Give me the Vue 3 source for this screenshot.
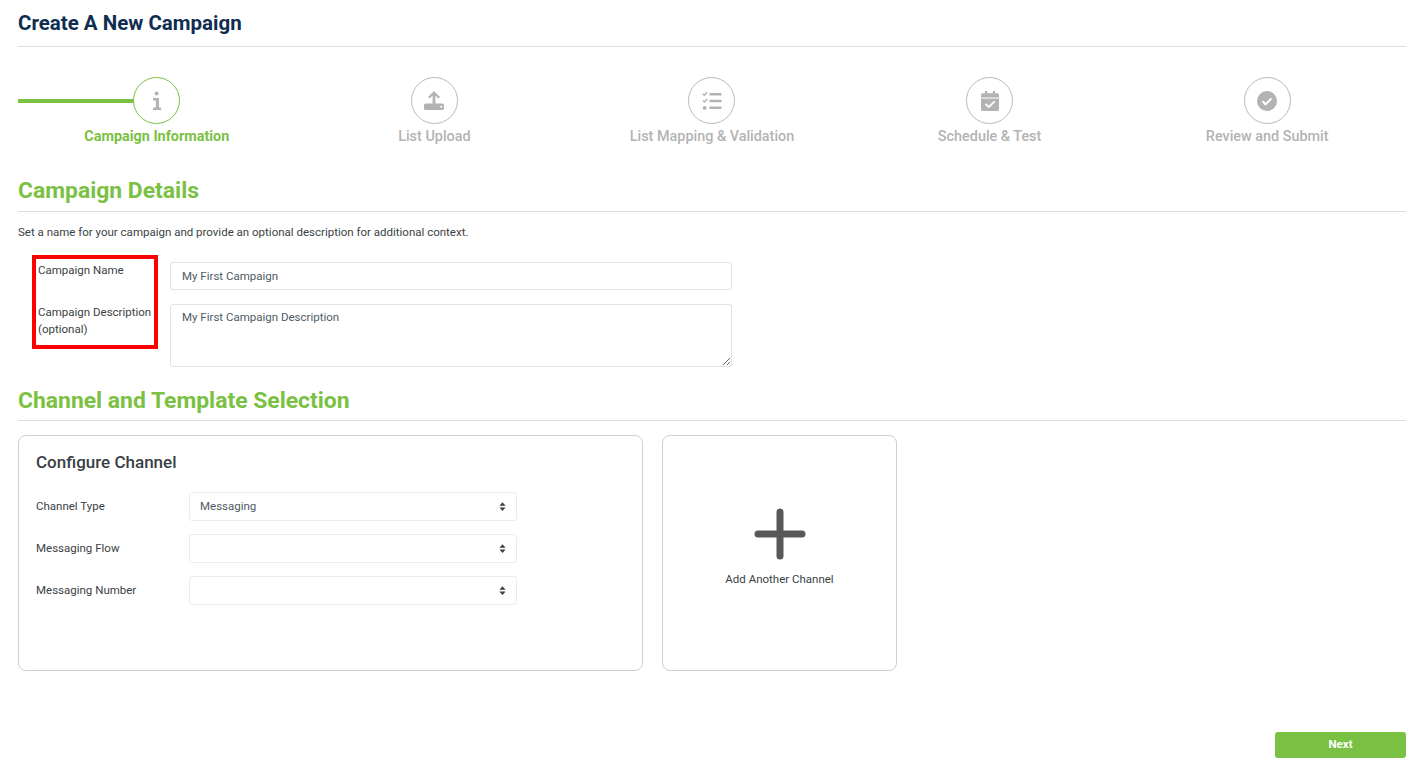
<template>
  <div class="page">
    <header class="page-header">
      <h1>Create A New Campaign</h1>
    </header>

    <ol class="stepper">
      <li v-for="(step, i) in steps" :key="step.label" class="step" :class="{ active: i === 0 }">
        <span v-if="i === 0" class="step-line"></span>
        <span class="step-circle">
          <svg v-if="step.icon === 'info'" width="24" height="24" viewBox="0 0 24 24" fill="#b3b3b3">
            <circle cx="11.600" cy="4.600" r="2" />
            <path d="M8 9h6v9.600h2.200V21H8v-2.400h2.800v-7.200H8z" />
          </svg>
          <svg v-else-if="step.icon === 'upload'" width="24" height="24" viewBox="0 0 24 24" fill="#b3b3b3">
            <path d="M12 2l6 6-1.500 1.500-3.100-3V15h-2.800V6.500l-3.100 3L6 8z" />
            <path fill-rule="evenodd" d="M3.700 14.500h16.600c.9 0 1.700.7 1.700 1.600v3.300c0 .9-.8 1.600-1.700 1.600H3.700c-.9 0-1.700-.7-1.700-1.600v-3.300c0-.9.8-1.600 1.700-1.600zm15.500 2.300a1 1 0 100 2 1 1 0 000-2z" />
          </svg>
          <svg v-else-if="step.icon === 'list'" width="24" height="24" viewBox="0 0 24 24" fill="#b3b3b3">
            <rect x="9.500" y="4" width="12" height="2.400" rx=".5" />
            <rect x="9.500" y="10.800" width="12" height="2.400" rx=".5" />
            <rect x="9.500" y="17.600" width="12" height="2.400" rx=".5" />
            <path d="M2.800 4.800l1.500 1.500 3-3" fill="none" stroke="#b3b3b3" stroke-width="1.500" />
            <path d="M2.800 11.500l1.500 1.500 3-3" fill="none" stroke="#b3b3b3" stroke-width="1.500" />
            <circle cx="4.600" cy="18.800" r="1.900" />
          </svg>
          <svg v-else-if="step.icon === 'calendar'" width="24" height="24" viewBox="0 0 24 24" fill="#b3b3b3">
            <path d="M7 2h2.200v2.200h5.600V2H17v2.200h2.200c.9 0 1.800.8 1.800 1.800v2.400H3V6c0-1 .9-1.800 1.800-1.800H7z" />
            <path fill-rule="evenodd" d="M3 9.600h18v10.600c0 1-.9 1.800-1.800 1.800H4.800C3.900 22 3 21.200 3 20.200zm13.100 2.200l-5.300 5-2.800-2.500-1.200 1.300 4 3.700 6.500-6.200z" />
          </svg>
          <svg v-else width="24" height="24" viewBox="0 0 24 24">
            <circle cx="12" cy="12" r="10" fill="#b3b3b3" />
            <path d="M7.500 12.300l3.100 3 5.900-5.900" fill="none" stroke="#fff" stroke-width="2" />
          </svg>
        </span>
        <span class="step-label">{{ step.label }}</span>
      </li>
    </ol>

    <section class="details">
      <h2 class="section-title details-title">Campaign Details</h2>
      <p class="intro">Set a name for your campaign and provide an optional description for additional context.</p>
      <div class="details-form">
        <label class="form-label">Campaign Name</label>
        <input class="form-input" type="text" value="My First Campaign" />
        <label class="form-label">Campaign Description (optional)</label>
        <textarea class="form-input form-area">My First Campaign Description</textarea>
        <div class="highlight"></div>
      </div>
    </section>

    <section class="channels">
      <h2 class="section-title">Channel and Template Selection</h2>
      <div class="cards">
        <div class="card config-card">
          <h3>Configure Channel</h3>
          <div v-for="row in channelRows" :key="row.label" class="select-row">
            <label>{{ row.label }}</label>
            <div class="select-wrap">
              <select>
                <option>{{ row.value }}</option>
              </select>
              <svg class="select-arrows" width="7" height="9" viewBox="0 0 8 10" fill="#3a3f45">
                <path d="M4 0l3.500 4H.5zM4 10L.5 6h7z" />
              </svg>
            </div>
          </div>
        </div>
        <div class="card add-card">
          <svg width="52" height="52" viewBox="0 0 52 52">
            <path d="M26 4v44M4 26h44" stroke="#58585a" stroke-width="7" stroke-linecap="round" />
          </svg>
          <span>Add Another Channel</span>
        </div>
      </div>
    </section>

    <footer class="actions">
      <button type="button" class="next-btn">Next</button>
    </footer>
  </div>
</template>

<script setup>
const steps = [
  { label: 'Campaign Information', icon: 'info' },
  { label: 'List Upload', icon: 'upload' },
  { label: 'List Mapping & Validation', icon: 'list' },
  { label: 'Schedule & Test', icon: 'calendar' },
  { label: 'Review and Submit', icon: 'check' }
];

const channelRows = [
  { label: 'Channel Type', value: 'Messaging' },
  { label: 'Messaging Flow', value: '' },
  { label: 'Messaging Number', value: '' }
];
</script>

<style scoped>
.page {
  height: 771px;
  box-sizing: border-box;
  padding: 0 18px;
  font-family: Roboto, "Liberation Sans", sans-serif;
  font-size: 11.5px;
  color: #3a3f45;
  background: #fff;
  overflow: hidden;
}

.page-header {
  height: 46px;
  border-bottom: 1px solid #dedede;
}

.page-header h1 {
  margin: 0;
  padding-top: 11px;
  font-size: 20.5px;
  line-height: 24px;
  font-weight: 700;
  color: #0e2d50;
}

.stepper {
  display: grid;
  grid-template-columns: repeat(5, 1fr);
  margin: 0;
  padding: 30px 0 0;
  list-style: none;
}

.step {
  position: relative;
  display: flex;
  flex-direction: column;
  align-items: center;
}

.step-line {
  position: absolute;
  left: 0;
  right: 50%;
  top: 22px;
  height: 4px;
  background: #7ac143;
}

.step-circle {
  position: relative;
  display: flex;
  align-items: center;
  justify-content: center;
  width: 47px;
  height: 47px;
  box-sizing: border-box;
  border: 1px solid #b9b9b9;
  border-radius: 50%;
  background: #fff;
}

.step.active .step-circle {
  border-color: #7ac143;
}

.step-label {
  margin-top: 4px;
  font-size: 14.400px;
  line-height: 17px;
  font-weight: 500;
  color: #b3b3b3;
}

.step.active .step-label {
  font-weight: 700;
  color: #7ac143;
}

.section-title {
  margin: 0;
  height: 33px;
  font-size: 22.900px;
  line-height: 28px;
  font-weight: 700;
  color: #7ac143;
  border-bottom: 1px solid #dedede;
  box-sizing: content-box;
}

.details {
  padding-top: 32px;
}

.details-title {
  height: 34px;
}

.intro {
  margin: 0;
  padding-top: 12px;
  line-height: 16px;
  color: #3a3f45;
}

.details-form {
  position: relative;
  display: grid;
  grid-template-columns: 132px 562px;
  column-gap: 0;
  row-gap: 14px;
  padding: 22px 0 0 20px;
}

.form-label {
  width: 118px;
  line-height: 17px;
  padding-top: 0;
}

.form-input {
  box-sizing: border-box;
  width: 562px;
  height: 28px;
  padding: 0 11px;
  border: 1px solid #e2e2e2;
  border-radius: 3px;
  font: inherit;
  color: #4f5a66;
  background: #fff;
  outline: none;
}

.form-area {
  height: 63px;
  padding: 4px 11px;
  line-height: 16px;
  resize: vertical;
}

.highlight {
  position: absolute;
  left: 14px;
  top: 15px;
  width: 126px;
  height: 94px;
  box-sizing: border-box;
  border: 4px solid #f00;
  pointer-events: none;
}

.channels {
  padding-top: 20px;
}

.cards {
  display: flex;
  gap: 19px;
  padding-top: 14px;
}

.card {
  box-sizing: border-box;
  height: 236px;
  border: 1px solid #cfcfcf;
  border-radius: 8px;
  background: #fff;
}

.config-card {
  width: 625px;
  padding: 17px 17px 0;
}

.config-card h3 {
  margin: 0 0 20px;
  font-size: 17px;
  line-height: 19px;
  font-weight: 500;
  color: #3a3f45;
}

.select-row {
  display: flex;
  align-items: flex-start;
  margin-bottom: 13px;
}

.select-row label {
  width: 153px;
  line-height: 28px;
}

.select-wrap {
  position: relative;
  width: 328px;
}

.select-wrap select {
  display: block;
  width: 100%;
  height: 29px;
  box-sizing: border-box;
  padding: 0 24px 1px 10px;
  border: 1px solid #ececec;
  border-radius: 3px;
  appearance: none;
  font: inherit;
  color: #4f5a66;
  background: #fff;
  outline: none;
}

.select-arrows {
  position: absolute;
  right: 11px;
  top: 10px;
  pointer-events: none;
}

.add-card {
  display: flex;
  flex-direction: column;
  align-items: center;
  width: 235px;
  padding-top: 72px;
}

.add-card span {
  margin-top: 11px;
  line-height: 16px;
}

.actions {
  display: flex;
  justify-content: flex-end;
  padding-top: 61px;
}

.next-btn {
  width: 131px;
  height: 26px;
  padding: 0 0 2px;
  border: 0;
  border-radius: 3px;
  font-family: inherit;
  font-size: 11.500px;
  font-weight: 700;
  color: #fff;
  background: #7ac143;
}
</style>

<style>
html, body {
  margin: 0;
  background: #fff;
}
</style>
